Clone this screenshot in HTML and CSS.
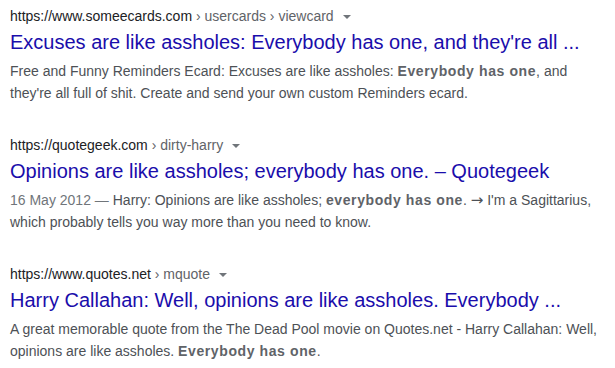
FILE: index.html
```html
<!DOCTYPE html>
<html lang="en">
<head>
  <meta charset="UTF-8" />
  <title>Search results</title>
  <link rel="stylesheet" href="styles.css">
</head>
<body>
  <div class="results">
    <div class="result">
      <div class="cite">https://www.someecards.com <span class="crumbs">› usercards › viewcard</span><span class="drop"></span></div>
      <h3 class="title">Excuses are like assholes: Everybody has one, and they're all ...</h3>
      <div class="snippet">Free and Funny Reminders Ecard: Excuses are like assholes: <b>Everybody has one</b>, and they're all full of shit. Create and send your own custom Reminders ecard.</div>
    </div>

    <div class="result">
      <div class="cite">https://quotegeek.com <span class="crumbs">› dirty-harry</span><span class="drop"></span></div>
      <h3 class="title">Opinions are like assholes; everybody has one. – Quotegeek</h3>
      <div class="snippet"><span class="date">16 May 2012 — </span>Harry: Opinions are like assholes; <b>everybody has one</b>. <span class="arrow">→</span> I'm a Sagittarius, which probably tells you way more than you need to know.</div>
    </div>

    <div class="result">
      <div class="cite">https://www.quotes.net <span class="crumbs">› mquote</span><span class="drop"></span></div>
      <h3 class="title">Harry Callahan: Well, opinions are like assholes. Everybody ...</h3>
      <div class="snippet">A great memorable quote from the The Dead Pool movie on Quotes.net - Harry Callahan: Well, opinions are like assholes. <b>Everybody has one</b>.</div>
    </div>
  </div>
</body>
</html>
```

FILE: styles.css
```css
body {
  font-family: Arial, "Liberation Sans", sans-serif;
  background-color: #ffffff;
  margin: 0;
  padding: 7px 0 0 10px;
}

.results {
  display: flex;
  flex-direction: column;
  gap: 32px;
  width: 600px;
}

.cite {
  font-size: 14px;
  line-height: 18px;
  color: #202124;
  white-space: nowrap;
}

.crumbs {
  color: #5f6368;
}

.drop {
  display: inline-block;
  width: 0;
  height: 0;
  margin-left: 9px;
  vertical-align: middle;
  border-left: 4px solid transparent;
  border-right: 4px solid transparent;
  border-top: 4px solid #70757a;
}

.title {
  margin: 4px 0 5px 0;
  font-size: 20px;
  line-height: 26px;
  font-weight: normal;
  color: #1a0dab;
  white-space: nowrap;
}

.snippet {
  font-size: 14px;
  line-height: 22px;
  color: #4d5156;
}

.snippet b {
  color: #5f6368;
  letter-spacing: 0.6px;
}

.date {
  color: #70757a;
}

.arrow {
  font-family: "DejaVu Sans", sans-serif;
  font-size: 15px;
}
```
